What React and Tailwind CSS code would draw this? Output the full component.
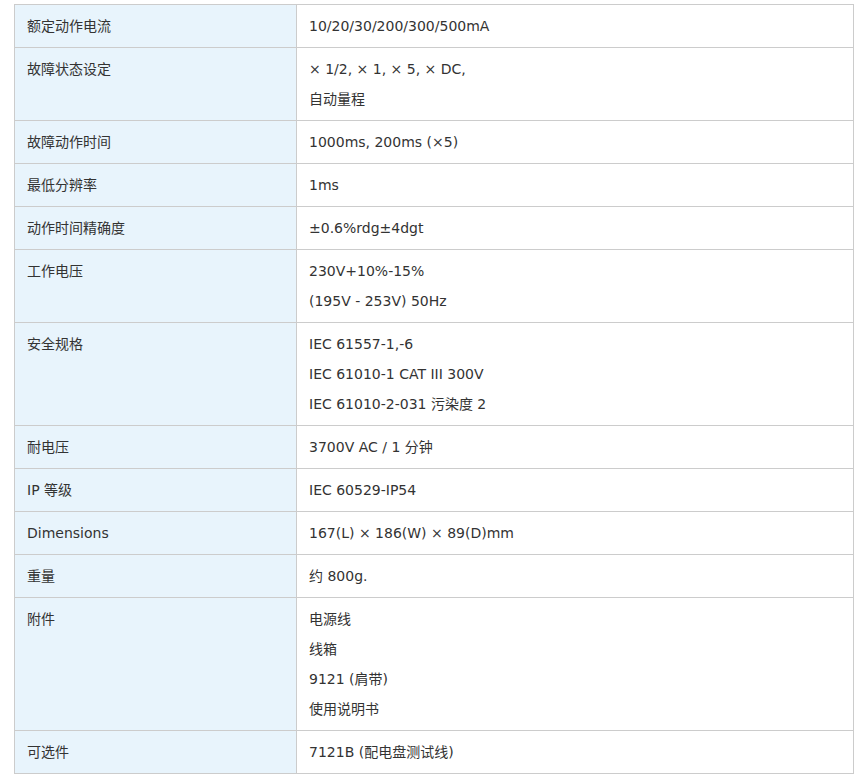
import React from 'react';

const rows = [
  { label: '额定动作电流', lines: ['10/20/30/200/300/500mA'] },
  { label: '故障状态设定', lines: ['× 1/2, × 1, × 5, × DC,', '自动量程'] },
  { label: '故障动作时间', lines: ['1000ms, 200ms (×5)'] },
  { label: '最低分辨率', lines: ['1ms'] },
  { label: '动作时间精确度', lines: ['±0.6%rdg±4dgt'] },
  { label: '工作电压', lines: ['230V+10%-15%', '(195V - 253V) 50Hz'] },
  { label: '安全规格', lines: ['IEC 61557-1,-6', 'IEC 61010-1 CAT III 300V', 'IEC 61010-2-031 污染度 2'] },
  { label: '耐电压', lines: ['3700V AC / 1 分钟'] },
  { label: 'IP 等级', lines: ['IEC 60529-IP54'] },
  { label: 'Dimensions', lines: ['167(L) × 186(W) × 89(D)mm'] },
  { label: '重量', lines: ['约 800g.'] },
  { label: '附件', lines: ['电源线', '线箱', '9121 (肩带)', '使用说明书'] },
  { label: '可选件', lines: ['7121B (配电盘测试线)'] },
];

export default function App() {
  return (
    <div
      className="bg-white pl-[14px] pt-[4px] text-[14px] text-[#333] min-h-[782px]"
      style={{ fontFamily: 'Verdana, "DejaVu Sans", "Noto Sans CJK SC", sans-serif' }}
    >
      <table className="w-[840px] border-collapse table-fixed">
        <colgroup>
          <col className="w-[282px]" />
          <col />
        </colgroup>
        <tbody>
          {rows.map((row) => (
            <tr key={row.label}>
              <td className="border border-[#ccc] bg-[#e8f4fc] px-[12px] py-[6px] leading-[30px] align-top">
                {row.label}
              </td>
              <td className="border border-[#ccc] bg-white px-[12px] py-[6px] leading-[30px] align-top">
                {row.lines.map((line, i) => (
                  <div key={i}>{line}</div>
                ))}
              </td>
            </tr>
          ))}
        </tbody>
      </table>
    </div>
  );
}
